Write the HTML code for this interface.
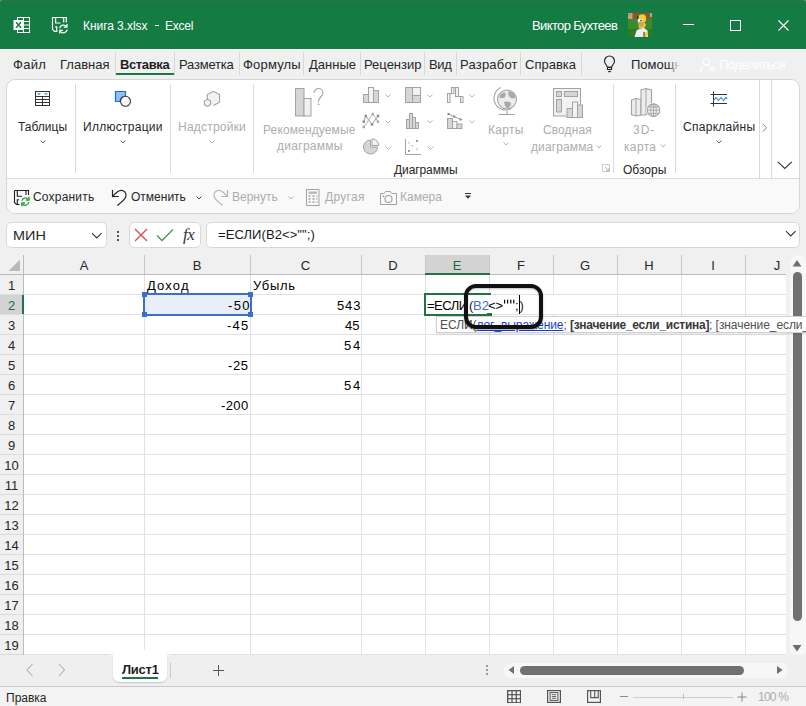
<!DOCTYPE html>
<html><head><meta charset="utf-8">
<style>
*{margin:0;padding:0;box-sizing:border-box}
html,body{width:806px;height:706px;overflow:hidden;background:#f0f0f0;font-family:"Liberation Sans",sans-serif;color:#262626}
.a{position:absolute}
.t{position:absolute;white-space:nowrap}
</style></head><body>
<div class="a" style="left:0px;top:0px;width:806px;height:49px;background:#147c42"></div><div class="a" style="left:0px;top:0px;width:806px;height:1px;background:#2a7550"></div><svg class="a" style="left:0px;top:0px" width="5" height="5" viewBox="0 0 5 5"><path d="M0 0 H3 A3 3 0 0 0 0 3 Z" fill="#6fa088"/></svg><svg class="a" style="left:801px;top:0px" width="5" height="5" viewBox="0 0 5 5"><path d="M5 0 H2 A3 3 0 0 1 5 3 Z" fill="#6fa088"/></svg><svg class="a" style="left:13px;top:16px" width="18" height="18" viewBox="0 0 18 18">
<rect x="4.5" y="1.5" width="12" height="15" fill="none" stroke="#fff" stroke-width="1"/>
<line x1="4.5" y1="5.5" x2="16.5" y2="5.5" stroke="#fff"/>
<line x1="4.5" y1="9" x2="16.5" y2="9" stroke="#fff"/>
<line x1="4.5" y1="12.5" x2="16.5" y2="12.5" stroke="#fff"/>
<line x1="10.5" y1="1.5" x2="10.5" y2="16.5" stroke="#fff"/>
<rect x="0.5" y="4" width="10" height="10" fill="#fff"/>
<path d="M3 6.2 L8 11.8 M8 6.2 L3 11.8" stroke="#177c43" stroke-width="1.5"/>
</svg><svg class="a" style="left:51px;top:16px" width="18" height="18" viewBox="0 0 18 18">
<path d="M1.5 1.5 H15.3 V6.5 M1.5 1.5 V13.3 L3.5 15.3 H6.5" fill="none" stroke="#fff" stroke-width="1.2"/>
<path d="M4.6 1.5 V7 H9.4" fill="none" stroke="#fff" stroke-width="1.2"/>
<path d="M12.7 1.5 V6.5" fill="none" stroke="#fff" stroke-width="1.2"/>
<path d="M5.7 15.3 V10.8 H4.2" fill="none" stroke="#fff" stroke-width="1.2"/>
<path d="M8.6 12.3 A3.9 3.9 0 0 1 15.5 10.6" fill="none" stroke="#fff" stroke-width="1.3"/>
<path d="M16 8 V11.2 H12.8" fill="none" stroke="#fff" stroke-width="1.3"/>
<path d="M16.2 13.6 A3.9 3.9 0 0 1 9.3 15.3" fill="none" stroke="#fff" stroke-width="1.3"/>
<path d="M8.8 17.5 V14.3 H12" fill="none" stroke="#fff" stroke-width="1.3"/>
</svg><div class="t" style="left:83px;top:16px;font-size:12px;color:#fff;line-height:20px;height:20px;letter-spacing:-0.06px">Книга 3.xlsx</div><div class="a" style="left:155px;top:25px;width:4px;height:1px;background:#fff"></div><div class="t" style="left:165px;top:16px;font-size:12px;color:#fff;line-height:20px;height:20px;letter-spacing:-0.25px">Excel</div><div class="t" style="left:532px;top:16px;font-size:13px;color:#fff;line-height:20px;height:20px;letter-spacing:-0.62px">Виктор Бухтеев</div><svg class="a" style="left:628px;top:13px" width="24" height="24" viewBox="0 0 24 24">
<rect width="24" height="24" fill="#3d8a2c"/>
<rect x="0" y="16" width="24" height="8" fill="#2f7a25"/>
<rect width="24" height="5.5" fill="#8b5530"/>
<rect x="0" y="0" width="4.5" height="6" fill="#c9a07a"/>
<rect x="22" y="0" width="2" height="4" fill="#c9a07a"/>
<rect x="0.5" y="1" width="1.2" height="1.2" fill="#e06a20"/>
<path d="M10.5 3 Q11.5 1.3 14.5 1.3 Q17.8 1.5 18 4.5 L18 11 Q17.5 13.5 16 15 L11 15 L10.5 12 Z" fill="#f3cf2c"/>
<path d="M9.8 5.8 H14.6 V9.2 H9.8 Z" fill="#f4f4f4"/>
<rect x="12.3" y="6.8" width="1.5" height="1.5" fill="#333"/>
<path d="M10.5 8.8 H15.6 V13 Q14 14.5 11.5 14 Z" fill="#c7a66e"/>
<rect x="9.2" y="3" width="1.2" height="3" fill="#2a2a1a"/>
<rect x="16.8" y="8.5" width="1" height="2" fill="#3a2a10"/>
<path d="M6.5 24 L8.5 17.5 Q12 14.5 16 15 L19.5 17.5 L20 24 Z" fill="#ededed"/>
<rect x="16" y="19.5" width="3.2" height="4.5" fill="#f3cf2c"/>
<rect x="15.5" y="19" width="1" height="5" fill="#3a3a20"/>
</svg><div class="a" style="left:683px;top:24px;width:11px;height:1px;background:#fff"></div><svg class="a" style="left:730px;top:20px" width="12" height="12" viewBox="0 0 12 12"><rect x="0.5" y="0.5" width="10" height="10" fill="none" stroke="#fff"/></svg><svg class="a" style="left:778px;top:20px" width="12" height="12" viewBox="0 0 12 12"><path d="M0.5 0.5 L10.5 10.5 M10.5 0.5 L0.5 10.5" stroke="#fff" stroke-width="1.1"/></svg><div class="t" style="left:13px;top:55px;font-size:13px;color:#262626;line-height:20px;height:20px;letter-spacing:0.27px">Файл</div><div class="t" style="left:60px;top:55px;font-size:13px;color:#262626;line-height:20px;height:20px">Главная</div><div class="t" style="left:179px;top:55px;font-size:13px;color:#262626;line-height:20px;height:20px;letter-spacing:-0.19px">Разметка</div><div class="t" style="left:243px;top:55px;font-size:13px;color:#262626;line-height:20px;height:20px;letter-spacing:0.18px">Формулы</div><div class="t" style="left:309px;top:55px;font-size:13px;color:#262626;line-height:20px;height:20px">Данные</div><div class="t" style="left:364px;top:55px;font-size:13px;color:#262626;line-height:20px;height:20px">Рецензир</div><div class="t" style="left:429px;top:55px;font-size:13px;color:#262626;line-height:20px;height:20px;letter-spacing:-0.4px">Вид</div><div class="t" style="left:460px;top:55px;font-size:13px;color:#262626;line-height:20px;height:20px;letter-spacing:0.2px">Разработ</div><div class="t" style="left:525px;top:55px;font-size:13px;color:#262626;line-height:20px;height:20px">Справка</div><div class="t" style="left:631px;top:55px;font-size:13px;color:#262626;line-height:20px;height:20px">Помощн</div><div class="t" style="left:120px;top:55px;font-size:13px;color:#1f1f1f;line-height:20px;height:20px;font-weight:700;letter-spacing:-0.38px">Вставка</div><div class="a" style="left:115px;top:73px;width:60px;height:2px;background:#147c42"></div><div class="a" style="left:115px;top:52px;width:1px;height:23px;background:#d8d8d8"></div><div class="a" style="left:174px;top:52px;width:1px;height:23px;background:#d8d8d8"></div><div class="a" style="left:239px;top:52px;width:1px;height:23px;background:#d8d8d8"></div><div class="a" style="left:303px;top:52px;width:1px;height:23px;background:#d8d8d8"></div><div class="a" style="left:360px;top:52px;width:1px;height:23px;background:#d8d8d8"></div><div class="a" style="left:424px;top:52px;width:1px;height:23px;background:#d8d8d8"></div><div class="a" style="left:456px;top:52px;width:1px;height:23px;background:#d8d8d8"></div><div class="a" style="left:520px;top:52px;width:1px;height:23px;background:#d8d8d8"></div><div class="a" style="left:581px;top:52px;width:1px;height:23px;background:#d8d8d8"></div><svg class="a" style="left:603px;top:55px" width="13" height="18" viewBox="0 0 13 18">
<path d="M4.5 12.3 L3 9.6 A5 5 0 1 1 10 9.6 L8.5 12.3 Z" fill="none" stroke="#222" stroke-width="1.1" stroke-linejoin="round"/>
<rect x="4.5" y="12.3" width="4" height="2.2" fill="none" stroke="#222" stroke-width="1.1"/>
<path d="M5.2 16.6 H7.8" stroke="#222" stroke-width="1.2"/>
</svg><svg class="a" style="left:700px;top:57px" width="16" height="16" viewBox="0 0 16 16">
<circle cx="6.5" cy="4.5" r="3.5" fill="none" stroke="#ffffff" stroke-width="1.1"/>
<path d="M0.5 15 C1 10 3.5 8.5 6.5 8.5 C8 8.5 9 9 10 9.5" fill="none" stroke="#ffffff" stroke-width="1.1"/>
<path d="M12 9 V15 M9 12 H15" stroke="#ffffff" stroke-width="1.1"/>
</svg><div class="t" style="left:719px;top:55px;font-size:13px;color:#ffffff;line-height:20px;height:20px;letter-spacing:-0.57px">Поделиться</div><div class="a" style="left:668px;top:55px;width:14px;height:20px;background:linear-gradient(to right, rgba(240,240,240,0), #f0f0f0 85%)"></div><div class="a" style="left:6px;top:79px;width:794px;height:135px;background:#fff;border:1px solid #d6d6d6;border-radius:9px"></div><div class="a" style="left:7px;top:178px;width:792px;height:35px;background:#f9f9f9;border-top:1px solid #dcdcdc;border-radius:0 0 8px 8px"></div><div class="a" style="left:75px;top:84px;width:1px;height:89px;background:#dadada"></div><div class="a" style="left:170px;top:84px;width:1px;height:89px;background:#dadada"></div><div class="a" style="left:253px;top:84px;width:1px;height:89px;background:#dadada"></div><div class="a" style="left:613px;top:84px;width:1px;height:89px;background:#dadada"></div><div class="a" style="left:675px;top:84px;width:1px;height:89px;background:#dadada"></div><div class="a" style="left:759px;top:79px;width:1px;height:99px;background:#dadada"></div><div class="a" style="left:771px;top:79px;width:1px;height:99px;background:#dadada"></div><svg class="a" style="left:35px;top:91px" width="15" height="15" viewBox="0 0 15 15">
<rect x="0.5" y="0.5" width="14" height="14" fill="#fff" stroke="#333"/>
<line x1="0.5" y1="5.5" x2="14.5" y2="5.5" stroke="#333"/>
<line x1="0.5" y1="8.5" x2="14.5" y2="8.5" stroke="#333"/>
<line x1="0.5" y1="11.5" x2="14.5" y2="11.5" stroke="#333"/>
<line x1="7.5" y1="5.5" x2="7.5" y2="14.5" stroke="#333"/>
<path d="M2 2.2 H6 L4 4 Z M9 2.2 H13 L11 4 Z" fill="#1e88d6"/>
</svg><div class="t" style="left:18px;top:117px;font-size:12px;color:#262626;line-height:20px;height:20px">Таблицы</div><svg class="a" style="left:39.5px;top:140px" width="6" height="4.5" viewBox="0 0 6 4.5"><path d="M0.5 0.5 L3.0 3.0 L5.5 0.5" fill="none" stroke="#666" stroke-width="1"/></svg><svg class="a" style="left:114px;top:90px" width="18" height="18" viewBox="0 0 18 18">
<path d="M1.5 1.5 H11.5 V6 A6 6 0 0 0 6 11.5 H1.5 Z" fill="#90c2f0" stroke="#1b6ec8" stroke-width="1.2"/>
<circle cx="11.5" cy="11.3" r="5" fill="#f7f7f7" stroke="#333" stroke-width="1.1"/>
</svg><div class="t" style="left:83px;top:117px;font-size:12px;color:#262626;line-height:20px;height:20px;letter-spacing:0.28px">Иллюстрации</div><svg class="a" style="left:120.0px;top:140px" width="6" height="4.5" viewBox="0 0 6 4.5"><path d="M0.5 0.5 L3.0 3.0 L5.5 0.5" fill="none" stroke="#666" stroke-width="1"/></svg><svg class="a" style="left:202px;top:89px" width="20" height="19" viewBox="0 0 20 19">
<path d="M5.3 10.5 V5.6 L11.4 2.3 L17.6 5.6 V13.2 L11.4 16.5" fill="#f2f2f2" stroke="#a3a3a3" stroke-width="1.1"/>
<path d="M5.5 10.2 L8.6 12 V15.6 L5.5 17.4 L2.4 15.6 V12 Z" fill="#f2f2f2" stroke="#a3a3a3" stroke-width="1.1"/>
</svg><div class="t" style="left:178px;top:117px;font-size:12px;color:#adadad;line-height:20px;height:20px;letter-spacing:0.22px">Надстройки</div><svg class="a" style="left:209.0px;top:140px" width="6" height="4.5" viewBox="0 0 6 4.5"><path d="M0.5 0.5 L3.0 3.0 L5.5 0.5" fill="none" stroke="#b5b5b5" stroke-width="1"/></svg><svg class="a" style="left:294px;top:87px" width="31" height="30" viewBox="0 0 31 30">
<rect x="1.5" y="1.5" width="8.5" height="27.5" fill="#d6d6d6" stroke="#a3a3a3"/>
<rect x="10" y="11.5" width="7" height="17.5" fill="#f0f0f0" stroke="#a3a3a3"/>
<path d="M20 6 C20 2.5 23 1.5 24.5 1.5 C27 1.5 29 3.5 29 6 C29 9.5 24.5 10.5 24.5 14 V15" fill="none" stroke="#a3a3a3" stroke-width="1.1"/>
<rect x="23.8" y="16.5" width="1.6" height="1.6" fill="#a3a3a3"/>
</svg><div class="t" style="left:263px;top:120px;font-size:12px;color:#adadad;line-height:20px;height:20px;letter-spacing:0.13px">Рекомендуемые</div><div class="t" style="left:277px;top:136px;font-size:12px;color:#adadad;line-height:20px;height:20px;letter-spacing:0.28px">диаграммы</div><svg class="a" style="left:362px;top:86px" width="18" height="18" viewBox="0 0 18 18">
<rect x="1.5" y="8.5" width="5" height="8" fill="#d6d6d6" stroke="#a3a3a3"/>
<rect x="6.5" y="1.5" width="5" height="15" fill="#f2f2f2" stroke="#a3a3a3"/>
<rect x="11.5" y="4.5" width="5" height="12" fill="#d6d6d6" stroke="#a3a3a3"/>
</svg><svg class="a" style="left:404px;top:86px" width="18" height="18" viewBox="0 0 18 18">
<rect x="1.5" y="1.5" width="15" height="15" fill="#d6d6d6" stroke="#a3a3a3"/>
<rect x="8.5" y="1.5" width="8" height="8" fill="#f2f2f2" stroke="#a3a3a3"/>
<path d="M8.5 1.5 V16.5" stroke="#a3a3a3"/>
</svg><svg class="a" style="left:446px;top:86px" width="18" height="18" viewBox="0 0 18 18">
<rect x="1.5" y="7.5" width="2.5" height="9" fill="#f2f2f2" stroke="#a3a3a3"/>
<rect x="5.5" y="1.5" width="2.5" height="6" fill="#f2f2f2" stroke="#a3a3a3"/>
<rect x="9.5" y="1.5" width="3" height="9" fill="#f2f2f2" stroke="#a3a3a3"/>
<rect x="14.5" y="10.5" width="2.5" height="6" fill="#f2f2f2" stroke="#a3a3a3"/>
<path d="M4 7.5 H5.5 M8 1.5 H9.5 M12.5 10.5 H14.5" stroke="#a3a3a3"/>
</svg><svg class="a" style="left:360px;top:110px" width="22" height="22" viewBox="0 0 22 22">
<path d="M3.8 11.7 L5.8 5.9 L12 14.5 L18 5.9" fill="none" stroke="#9a9a9a" stroke-width="1"/>
<path d="M3.8 17 L12.8 4 L18 11.7" fill="none" stroke="#b4b4b4" stroke-width="1"/>
<rect x="2.6" y="10.5" width="2.4" height="2.4" fill="#8a8a8a"/><rect x="4.6" y="4.7" width="2.4" height="2.4" fill="#8a8a8a"/>
<rect x="10.8" y="13.3" width="2.4" height="2.4" fill="#8a8a8a"/><rect x="16.8" y="4.7" width="2.4" height="2.4" fill="#8a8a8a"/>
<rect x="2.6" y="15.8" width="2.4" height="2.4" fill="#aaa"/><rect x="11.6" y="2.8" width="2.4" height="2.4" fill="#aaa"/><rect x="16.8" y="10.5" width="2.4" height="2.4" fill="#aaa"/>
</svg><svg class="a" style="left:404px;top:112px" width="18" height="18" viewBox="0 0 18 18">
<rect x="2.5" y="7.5" width="3" height="9" fill="#d6d6d6" stroke="#a3a3a3"/>
<rect x="5.5" y="1.5" width="3" height="15" fill="#d6d6d6" stroke="#a3a3a3"/>
<rect x="8.5" y="5.5" width="3" height="11" fill="#d6d6d6" stroke="#a3a3a3"/>
<rect x="11.5" y="10.5" width="3" height="6" fill="#d6d6d6" stroke="#a3a3a3"/>
</svg><svg class="a" style="left:446px;top:112px" width="18" height="18" viewBox="0 0 18 18">
<rect x="1.5" y="6.5" width="5" height="10" fill="#d6d6d6" stroke="#a3a3a3"/>
<rect x="6.5" y="9.5" width="4.5" height="7" fill="#f2f2f2" stroke="#a3a3a3"/>
<rect x="11" y="12" width="5" height="4.5" fill="#d6d6d6" stroke="#a3a3a3"/>
<path d="M2.5 2 L8 4.5 L15 7.5" fill="none" stroke="#999" stroke-width="0.9"/>
<rect x="1.5" y="1" width="2.2" height="2" fill="#888"/><rect x="7" y="3.5" width="2.2" height="2" fill="#888"/><rect x="13.5" y="6.5" width="2.2" height="2" fill="#888"/>
</svg><svg class="a" style="left:362px;top:138px" width="18" height="18" viewBox="0 0 18 18">
<path d="M8.5 2 A7 7 0 1 0 15.5 9 H8.5 Z" fill="#d6d6d6" stroke="#a3a3a3"/>
<path d="M10 0.8 A7 7 0 0 1 16.8 7.5 H10 Z" fill="#f2f2f2" stroke="#a3a3a3"/>
</svg><svg class="a" style="left:404px;top:138px" width="18" height="18" viewBox="0 0 18 18">
<path d="M1.5 1 V16.5 H17" fill="none" stroke="#a3a3a3"/>
<rect x="4" y="4" width="1.6" height="1.6" fill="#ccc"/><rect x="7.5" y="7" width="1.6" height="1.6" fill="#ccc"/>
<rect x="12" y="2" width="1.8" height="1.8" fill="#888"/><rect x="4" y="12" width="1.8" height="1.8" fill="#888"/>
<rect x="12" y="10.5" width="1.6" height="1.6" fill="#ccc"/>
</svg><svg class="a" style="left:385.0px;top:94px" width="6" height="4.5" viewBox="0 0 6 4.5"><path d="M0.5 0.5 L3.0 3.0 L5.5 0.5" fill="none" stroke="#b5b5b5" stroke-width="1"/></svg><svg class="a" style="left:385.0px;top:120px" width="6" height="4.5" viewBox="0 0 6 4.5"><path d="M0.5 0.5 L3.0 3.0 L5.5 0.5" fill="none" stroke="#b5b5b5" stroke-width="1"/></svg><svg class="a" style="left:427.0px;top:94px" width="6" height="4.5" viewBox="0 0 6 4.5"><path d="M0.5 0.5 L3.0 3.0 L5.5 0.5" fill="none" stroke="#b5b5b5" stroke-width="1"/></svg><svg class="a" style="left:427.0px;top:120px" width="6" height="4.5" viewBox="0 0 6 4.5"><path d="M0.5 0.5 L3.0 3.0 L5.5 0.5" fill="none" stroke="#b5b5b5" stroke-width="1"/></svg><svg class="a" style="left:469.0px;top:94px" width="6" height="4.5" viewBox="0 0 6 4.5"><path d="M0.5 0.5 L3.0 3.0 L5.5 0.5" fill="none" stroke="#b5b5b5" stroke-width="1"/></svg><svg class="a" style="left:469.0px;top:120px" width="6" height="4.5" viewBox="0 0 6 4.5"><path d="M0.5 0.5 L3.0 3.0 L5.5 0.5" fill="none" stroke="#b5b5b5" stroke-width="1"/></svg><svg class="a" style="left:384.5px;top:146px" width="7" height="5.0" viewBox="0 0 7 5.0"><path d="M0.5 0.5 L3.5 3.5 L6.5 0.5" fill="none" stroke="#b5b5b5" stroke-width="1"/></svg><svg class="a" style="left:426.5px;top:146px" width="7" height="5.0" viewBox="0 0 7 5.0"><path d="M0.5 0.5 L3.5 3.5 L6.5 0.5" fill="none" stroke="#b5b5b5" stroke-width="1"/></svg><div class="t" style="left:394px;top:160px;font-size:12px;color:#262626;line-height:20px;height:20px;letter-spacing:-0.1px">Диаграммы</div><svg class="a" style="left:601px;top:163px" width="10" height="10" viewBox="0 0 10 10"><path d="M1.5 1.5 V8.5 H8.5 V1.5 Z" fill="none" stroke="#c9c9c9"/><path d="M4 4 L8 8 M8 5 V8 H5" fill="none" stroke="#b0b0b0"/></svg><svg class="a" style="left:492px;top:86px" width="26" height="32" viewBox="0 0 26 32">
<path d="M9 1.5 A11.5 11.5 0 0 0 18.5 23" fill="none" stroke="#a3a3a3" stroke-width="1.1"/>
<circle cx="15" cy="13.5" r="9.5" fill="#ececec" stroke="#a3a3a3" stroke-width="1.1"/>
<path d="M8 9 Q10 6 13 6.5 Q14.5 9 12.5 11.5 Q10 12.5 7.5 12 Z M16.5 5 Q21 5.5 23.5 10 Q23 13 20 12.5 Q17 11 16 8 Z M12 16 Q16 14.5 19 17 Q19 21 15 22.5 Q12.5 20 12 16 Z" fill="#a9a9a9"/>
<path d="M15 25 V28.5 M6.5 28.5 H23" stroke="#a3a3a3" stroke-width="1.1"/>
</svg><div class="t" style="left:488px;top:120px;font-size:12px;color:#adadad;line-height:20px;height:20px;letter-spacing:0.3px">Карты</div><svg class="a" style="left:503.0px;top:142px" width="6" height="4.5" viewBox="0 0 6 4.5"><path d="M0.5 0.5 L3.0 3.0 L5.5 0.5" fill="none" stroke="#b5b5b5" stroke-width="1"/></svg><svg class="a" style="left:552px;top:87px" width="32" height="32" viewBox="0 0 32 32">
<rect x="1.5" y="1.5" width="27" height="27.5" fill="#f2f2f2" stroke="#a3a3a3"/>
<rect x="4.5" y="4.5" width="5" height="5" fill="#d6d6d6" stroke="#a3a3a3"/>
<rect x="12.5" y="4.5" width="13" height="5" fill="#d6d6d6" stroke="#a3a3a3"/>
<rect x="4.5" y="12.5" width="5" height="12.5" fill="#d6d6d6" stroke="#a3a3a3"/>
<rect x="15" y="21.5" width="5.5" height="9" fill="#d6d6d6" stroke="#a3a3a3" />
<rect x="20.5" y="15" width="5" height="15.5" fill="#f2f2f2" stroke="#a3a3a3"/>
<rect x="25.5" y="18" width="5" height="12.5" fill="#d6d6d6" stroke="#a3a3a3"/>
</svg><div class="t" style="left:543px;top:120px;font-size:12px;color:#adadad;line-height:20px;height:20px;letter-spacing:0.1px">Сводная</div><div class="t" style="left:531px;top:137px;font-size:12px;color:#adadad;line-height:20px;height:20px;letter-spacing:0.12px">диаграмма</div><svg class="a" style="left:596.0px;top:145px" width="6" height="4.5" viewBox="0 0 6 4.5"><path d="M0.5 0.5 L3.0 3.0 L5.5 0.5" fill="none" stroke="#b5b5b5" stroke-width="1"/></svg><svg class="a" style="left:630px;top:87px" width="32" height="32" viewBox="0 0 32 32">
<path d="M1.5 13 L6 11.5 L11 12.5 V28 L6 29 L1.5 27.5 Z" fill="#ededed" stroke="#a3a3a3" stroke-width="1.1"/>
<path d="M6 11.5 V29" stroke="#a3a3a3"/>
<path d="M11 3 L16 1.5 L21.5 3 V24 L16 28 L11 28 Z" fill="#ededed" stroke="#a3a3a3" stroke-width="1.1"/>
<path d="M16 1.5 V28" stroke="#a3a3a3"/>
<circle cx="23.5" cy="23.2" r="7.5" fill="#fff"/>
<circle cx="23.5" cy="23.2" r="6.3" fill="#f2f2f2" stroke="#a3a3a3" stroke-width="1.1"/>
<path d="M17.2 23.2 H29.8 M23.5 17 V29.5 M18.3 20 H28.7 M18.3 26.4 H28.7" stroke="#a3a3a3" stroke-width="0.9"/>
<ellipse cx="23.5" cy="23.2" rx="2.8" ry="6.3" fill="none" stroke="#a3a3a3" stroke-width="0.9"/>
</svg><div class="t" style="left:633px;top:120px;font-size:12px;color:#adadad;line-height:20px;height:20px;letter-spacing:1.0px">3D-</div><div class="t" style="left:624px;top:137px;font-size:12px;color:#adadad;line-height:20px;height:20px;letter-spacing:0.35px">карта</div><svg class="a" style="left:660.0px;top:144px" width="6" height="4.5" viewBox="0 0 6 4.5"><path d="M0.5 0.5 L3.0 3.0 L5.5 0.5" fill="none" stroke="#b5b5b5" stroke-width="1"/></svg><div class="t" style="left:623px;top:160px;font-size:12px;color:#262626;line-height:20px;height:20px">Обзоры</div><svg class="a" style="left:710px;top:91px" width="18" height="16" viewBox="0 0 18 16">
<path d="M0.5 3.5 H17 M0.5 12.5 H17 M3.5 0.5 V15.5" stroke="#333" stroke-width="1"/>
<path d="M3.5 9.5 L6 6.5 L8.5 9.5 L11 6.5 L13.5 9.5 L16 6.5 L17 8" fill="none" stroke="#2b8ad6" stroke-width="1.1"/>
</svg><div class="t" style="left:683px;top:117px;font-size:12px;color:#262626;line-height:20px;height:20px;letter-spacing:0.28px">Спарклайны</div><svg class="a" style="left:716.0px;top:140px" width="6" height="4.5" viewBox="0 0 6 4.5"><path d="M0.5 0.5 L3.0 3.0 L5.5 0.5" fill="none" stroke="#666" stroke-width="1"/></svg><svg class="a" style="left:762px;top:123px" width="6" height="10" viewBox="0 0 6 10"><path d="M0.8 0.8 L4.5 4.8 L0.8 8.8" fill="none" stroke="#888" stroke-width="1"/></svg><svg class="a" style="left:777px;top:161px" width="16" height="9" viewBox="0 0 16 9"><path d="M0.8 0.8 L7.8 7.5 L14.8 0.8" fill="none" stroke="#333" stroke-width="1.1"/></svg><svg class="a" style="left:13px;top:189px" width="18" height="18" viewBox="0 0 18 18">
<path d="M1.5 1.5 H15.5 V6 M1.5 1.5 V13.5 L3.5 15.5 H6.5" fill="none" stroke="#222" stroke-width="1.1"/>
<path d="M4.3 1.5 V7.3 H9" fill="none" stroke="#222" stroke-width="1.1"/>
<path d="M13 1.5 V6" fill="none" stroke="#222" stroke-width="1.1"/>
<path d="M4.3 15.5 V10.8 H6" fill="none" stroke="#222" stroke-width="1.1"/>
<path d="M8.8 11.8 A3.9 3.9 0 0 1 15.5 10.3" fill="none" stroke="#26a040" stroke-width="1.3"/>
<path d="M16 7.8 V11 H12.8" fill="none" stroke="#26a040" stroke-width="1.3"/>
<path d="M16 13.2 A3.9 3.9 0 0 1 9.3 15" fill="none" stroke="#26a040" stroke-width="1.3"/>
<path d="M8.8 17.2 V14 H12" fill="none" stroke="#26a040" stroke-width="1.3"/>
</svg><div class="t" style="left:33px;top:187px;font-size:12px;color:#262626;line-height:20px;height:20px;letter-spacing:0.19px">Сохранить</div><svg class="a" style="left:110px;top:188px" width="18" height="19" viewBox="0 0 18 19">
<path d="M2.5 2 V8.5 H8.8" fill="none" stroke="#222" stroke-width="1.2"/>
<path d="M2.8 8.2 C6 4.5 8 2.3 11 2.3 C14 2.3 16 4.5 16 7.5 C16 10 14.5 11.3 7.5 17.5" fill="none" stroke="#222" stroke-width="1.2"/>
</svg><div class="t" style="left:131px;top:187px;font-size:12px;color:#262626;line-height:20px;height:20px">Отменить</div><svg class="a" style="left:196.0px;top:196px" width="6" height="4.5" viewBox="0 0 6 4.5"><path d="M0.5 0.5 L3.0 3.0 L5.5 0.5" fill="none" stroke="#444" stroke-width="1"/></svg><svg class="a" style="left:212px;top:188px" width="18" height="19" viewBox="0 0 18 19">
<path d="M15.5 2 V8.5 H9.2" fill="none" stroke="#b5b5b5" stroke-width="1.2"/>
<path d="M15.2 8.2 C12 4.5 10 2.3 7 2.3 C4 2.3 2 4.5 2 7.5 C2 10 3.5 11.3 10.5 17.5" fill="none" stroke="#b5b5b5" stroke-width="1.2"/>
</svg><div class="t" style="left:232px;top:187px;font-size:12px;color:#adadad;line-height:20px;height:20px">Вернуть</div><svg class="a" style="left:288.0px;top:196px" width="6" height="4.5" viewBox="0 0 6 4.5"><path d="M0.5 0.5 L3.0 3.0 L5.5 0.5" fill="none" stroke="#bdbdbd" stroke-width="1"/></svg><svg class="a" style="left:306px;top:189px" width="14" height="18" viewBox="0 0 14 18">
<rect x="0.5" y="0.5" width="12.5" height="16" fill="none" stroke="#a3a3a3" stroke-width="1"/>
<rect x="2.5" y="2.5" width="8.5" height="2.5" fill="#bbb"/>
<path d="M2.5 7 h2 m2 0 h2 m2 0 h1 M2.5 10 h2 m2 0 h2 m2 0 h1 M2.5 13 h2 m2 0 h2 m2 0 h1" stroke="#a3a3a3" stroke-width="1.6"/>
</svg><div class="t" style="left:325px;top:187px;font-size:12px;color:#adadad;line-height:20px;height:20px;letter-spacing:0.3px">Другая</div><svg class="a" style="left:380px;top:190px" width="18" height="16" viewBox="0 0 18 16">
<path d="M0.5 3.5 H4 L5.5 1.5 H10.5 L12 3.5 H16.5 V14.5 H0.5 Z" fill="none" stroke="#a3a3a3" stroke-width="1"/>
<circle cx="8.5" cy="9" r="3.5" fill="none" stroke="#a3a3a3" stroke-width="1.1"/>
<rect x="2.5" y="5.5" width="1.6" height="1.6" fill="#a3a3a3"/>
</svg><div class="t" style="left:400px;top:187px;font-size:12px;color:#adadad;line-height:20px;height:20px">Камера</div><svg class="a" style="left:464px;top:192px" width="8" height="8" viewBox="0 0 8 8"><path d="M1 1.5 H7" stroke="#333" stroke-width="1"/><path d="M1 3.5 H7 L4 6.8 Z" fill="#333"/></svg><div class="a" style="left:6px;top:222px;width:101px;height:26px;background:#fff;border:1px solid #d9d9d9;border-radius:5px"></div><div class="t" style="left:12.5px;top:226px;font-size:13px;color:#262626;line-height:20px;height:20px;transform:scaleX(1.11);transform-origin:0 0">МИН</div><svg class="a" style="left:91px;top:232px" width="12" height="8" viewBox="0 0 12 8"><path d="M1 1.2 L5.8 6 L10.6 1.2" fill="none" stroke="#333" stroke-width="1.1"/></svg><div class="a" style="left:117px;top:231px;width:2px;height:2px;background:#555"></div><div class="a" style="left:117px;top:235px;width:2px;height:2px;background:#555"></div><div class="a" style="left:117px;top:239px;width:2px;height:2px;background:#555"></div><div class="a" style="left:129px;top:222px;width:72px;height:26px;background:#fff;border:1px solid #d9d9d9;border-radius:5px"></div><svg class="a" style="left:134px;top:228px" width="14" height="14" viewBox="0 0 14 14"><path d="M1 1 L13 13 M13 1 L1 13" stroke="#e04848" stroke-width="1.3"/></svg><svg class="a" style="left:156px;top:228px" width="18" height="14" viewBox="0 0 18 14"><path d="M1 7.5 L6 12.5 L17 1.5" fill="none" stroke="#3d9b55" stroke-width="1.3"/></svg><div class="t" style="left:183px;top:224px;font-size:17px;color:#333;line-height:22px;height:22px;font-family:'Liberation Serif',serif;font-style:italic;letter-spacing:-0.5px">fx</div><div class="a" style="left:206px;top:222px;width:594px;height:26px;background:#fff;border:1px solid #d9d9d9;border-radius:5px"></div><div class="t" style="left:218px;top:225px;font-size:13px;color:#1a1a1a;line-height:20px;height:20px;letter-spacing:0.08px">=ЕСЛИ(B2&lt;&gt;"";)</div><svg class="a" style="left:785px;top:230px" width="12" height="8" viewBox="0 0 12 8"><path d="M1 1.2 L5.8 6 L10.6 1.2" fill="none" stroke="#333" stroke-width="1.1"/></svg><div class="a" style="left:0px;top:255px;width:786px;height:20px;background:#f0f0f0"></div><div class="a" style="left:0px;top:275px;width:24px;height:380px;background:#f0f0f0"></div><div class="a" style="left:24px;top:275px;width:762px;height:380px;background:#fff"></div><div class="a" style="left:425px;top:255px;width:65px;height:19px;background:#d3d3d3"></div><div class="a" style="left:0px;top:295px;width:23px;height:19px;background:#d3d3d3"></div><div class="a" style="left:24px;top:294px;width:762px;height:1px;background:#e1e1e1"></div><div class="a" style="left:0px;top:294px;width:23px;height:1px;background:#dcdcdc"></div><div class="a" style="left:24px;top:314px;width:762px;height:1px;background:#e1e1e1"></div><div class="a" style="left:0px;top:314px;width:23px;height:1px;background:#dcdcdc"></div><div class="a" style="left:24px;top:334px;width:762px;height:1px;background:#e1e1e1"></div><div class="a" style="left:0px;top:334px;width:23px;height:1px;background:#dcdcdc"></div><div class="a" style="left:24px;top:354px;width:762px;height:1px;background:#e1e1e1"></div><div class="a" style="left:0px;top:354px;width:23px;height:1px;background:#dcdcdc"></div><div class="a" style="left:24px;top:374px;width:762px;height:1px;background:#e1e1e1"></div><div class="a" style="left:0px;top:374px;width:23px;height:1px;background:#dcdcdc"></div><div class="a" style="left:24px;top:394px;width:762px;height:1px;background:#e1e1e1"></div><div class="a" style="left:0px;top:394px;width:23px;height:1px;background:#dcdcdc"></div><div class="a" style="left:24px;top:414px;width:762px;height:1px;background:#e1e1e1"></div><div class="a" style="left:0px;top:414px;width:23px;height:1px;background:#dcdcdc"></div><div class="a" style="left:24px;top:434px;width:762px;height:1px;background:#e1e1e1"></div><div class="a" style="left:0px;top:434px;width:23px;height:1px;background:#dcdcdc"></div><div class="a" style="left:24px;top:454px;width:762px;height:1px;background:#e1e1e1"></div><div class="a" style="left:0px;top:454px;width:23px;height:1px;background:#dcdcdc"></div><div class="a" style="left:24px;top:474px;width:762px;height:1px;background:#e1e1e1"></div><div class="a" style="left:0px;top:474px;width:23px;height:1px;background:#dcdcdc"></div><div class="a" style="left:24px;top:494px;width:762px;height:1px;background:#e1e1e1"></div><div class="a" style="left:0px;top:494px;width:23px;height:1px;background:#dcdcdc"></div><div class="a" style="left:24px;top:514px;width:762px;height:1px;background:#e1e1e1"></div><div class="a" style="left:0px;top:514px;width:23px;height:1px;background:#dcdcdc"></div><div class="a" style="left:24px;top:534px;width:762px;height:1px;background:#e1e1e1"></div><div class="a" style="left:0px;top:534px;width:23px;height:1px;background:#dcdcdc"></div><div class="a" style="left:24px;top:554px;width:762px;height:1px;background:#e1e1e1"></div><div class="a" style="left:0px;top:554px;width:23px;height:1px;background:#dcdcdc"></div><div class="a" style="left:24px;top:574px;width:762px;height:1px;background:#e1e1e1"></div><div class="a" style="left:0px;top:574px;width:23px;height:1px;background:#dcdcdc"></div><div class="a" style="left:24px;top:594px;width:762px;height:1px;background:#e1e1e1"></div><div class="a" style="left:0px;top:594px;width:23px;height:1px;background:#dcdcdc"></div><div class="a" style="left:24px;top:614px;width:762px;height:1px;background:#e1e1e1"></div><div class="a" style="left:0px;top:614px;width:23px;height:1px;background:#dcdcdc"></div><div class="a" style="left:24px;top:634px;width:762px;height:1px;background:#e1e1e1"></div><div class="a" style="left:0px;top:634px;width:23px;height:1px;background:#dcdcdc"></div><div class="a" style="left:24px;top:654px;width:762px;height:1px;background:#e1e1e1"></div><div class="a" style="left:0px;top:654px;width:23px;height:1px;background:#dcdcdc"></div><div class="a" style="left:144px;top:275px;width:1px;height:380px;background:#e1e1e1"></div><div class="a" style="left:144px;top:255px;width:1px;height:19px;background:#c8c8c8"></div><div class="a" style="left:250px;top:275px;width:1px;height:380px;background:#e1e1e1"></div><div class="a" style="left:250px;top:255px;width:1px;height:19px;background:#c8c8c8"></div><div class="a" style="left:361px;top:275px;width:1px;height:380px;background:#e1e1e1"></div><div class="a" style="left:361px;top:255px;width:1px;height:19px;background:#c8c8c8"></div><div class="a" style="left:425px;top:275px;width:1px;height:380px;background:#e1e1e1"></div><div class="a" style="left:425px;top:255px;width:1px;height:19px;background:#c8c8c8"></div><div class="a" style="left:489px;top:275px;width:1px;height:380px;background:#e1e1e1"></div><div class="a" style="left:489px;top:255px;width:1px;height:19px;background:#c8c8c8"></div><div class="a" style="left:553px;top:275px;width:1px;height:380px;background:#e1e1e1"></div><div class="a" style="left:553px;top:255px;width:1px;height:19px;background:#c8c8c8"></div><div class="a" style="left:617px;top:275px;width:1px;height:380px;background:#e1e1e1"></div><div class="a" style="left:617px;top:255px;width:1px;height:19px;background:#c8c8c8"></div><div class="a" style="left:681px;top:275px;width:1px;height:380px;background:#e1e1e1"></div><div class="a" style="left:681px;top:255px;width:1px;height:19px;background:#c8c8c8"></div><div class="a" style="left:745px;top:275px;width:1px;height:380px;background:#e1e1e1"></div><div class="a" style="left:745px;top:255px;width:1px;height:19px;background:#c8c8c8"></div><div class="a" style="left:0px;top:274px;width:786px;height:1px;background:#bcbcbc"></div><div class="a" style="left:23px;top:255px;width:1px;height:400px;background:#bcbcbc"></div><div class="a" style="left:425px;top:273px;width:65px;height:2px;background:#217346"></div><div class="a" style="left:22px;top:295px;width:2px;height:19px;background:#217346"></div><svg class="a" style="left:8px;top:259px" width="13" height="13" viewBox="0 0 13 13"><path d="M12 0.5 V12 H0.5 Z" fill="#b9b9b9"/></svg><div class="t" style="left:24px;top:256px;width:120px;text-align:center;font-size:13px;line-height:20px;color:#262626">A</div><div class="t" style="left:144px;top:256px;width:106px;text-align:center;font-size:13px;line-height:20px;color:#262626">B</div><div class="t" style="left:250px;top:256px;width:111px;text-align:center;font-size:13px;line-height:20px;color:#262626">C</div><div class="t" style="left:361px;top:256px;width:64px;text-align:center;font-size:13px;line-height:20px;color:#262626">D</div><div class="t" style="left:425px;top:256px;width:64px;text-align:center;font-size:13px;line-height:20px;color:#1d6b3c">E</div><div class="t" style="left:489px;top:256px;width:64px;text-align:center;font-size:13px;line-height:20px;color:#262626">F</div><div class="t" style="left:553px;top:256px;width:64px;text-align:center;font-size:13px;line-height:20px;color:#262626">G</div><div class="t" style="left:617px;top:256px;width:64px;text-align:center;font-size:13px;line-height:20px;color:#262626">H</div><div class="t" style="left:681px;top:256px;width:64px;text-align:center;font-size:13px;line-height:20px;color:#262626">I</div><div class="t" style="left:745px;top:256px;width:64px;text-align:center;font-size:13px;line-height:20px;color:#262626">J</div><div class="t" style="left:0;top:276px;width:23px;text-align:center;font-size:13px;line-height:20px;color:#262626">1</div><div class="t" style="left:0;top:296px;width:23px;text-align:center;font-size:13px;line-height:20px;color:#1d6b3c">2</div><div class="t" style="left:0;top:316px;width:23px;text-align:center;font-size:13px;line-height:20px;color:#262626">3</div><div class="t" style="left:0;top:336px;width:23px;text-align:center;font-size:13px;line-height:20px;color:#262626">4</div><div class="t" style="left:0;top:356px;width:23px;text-align:center;font-size:13px;line-height:20px;color:#262626">5</div><div class="t" style="left:0;top:376px;width:23px;text-align:center;font-size:13px;line-height:20px;color:#262626">6</div><div class="t" style="left:0;top:396px;width:23px;text-align:center;font-size:13px;line-height:20px;color:#262626">7</div><div class="t" style="left:0;top:416px;width:23px;text-align:center;font-size:13px;line-height:20px;color:#262626">8</div><div class="t" style="left:0;top:436px;width:23px;text-align:center;font-size:13px;line-height:20px;color:#262626">9</div><div class="t" style="left:0;top:456px;width:23px;text-align:center;font-size:13px;line-height:20px;color:#262626">10</div><div class="t" style="left:0;top:476px;width:23px;text-align:center;font-size:13px;line-height:20px;color:#262626">11</div><div class="t" style="left:0;top:496px;width:23px;text-align:center;font-size:13px;line-height:20px;color:#262626">12</div><div class="t" style="left:0;top:516px;width:23px;text-align:center;font-size:13px;line-height:20px;color:#262626">13</div><div class="t" style="left:0;top:536px;width:23px;text-align:center;font-size:13px;line-height:20px;color:#262626">14</div><div class="t" style="left:0;top:556px;width:23px;text-align:center;font-size:13px;line-height:20px;color:#262626">15</div><div class="t" style="left:0;top:576px;width:23px;text-align:center;font-size:13px;line-height:20px;color:#262626">16</div><div class="t" style="left:0;top:596px;width:23px;text-align:center;font-size:13px;line-height:20px;color:#262626">17</div><div class="t" style="left:0;top:616px;width:23px;text-align:center;font-size:13px;line-height:20px;color:#262626">18</div><div class="t" style="left:0;top:636px;width:23px;text-align:center;font-size:13px;line-height:20px;color:#262626">19</div><div class="a" style="left:145px;top:295px;width:105px;height:19px;background:#e8eef8"></div><div class="a" style="left:143px;top:293px;width:109px;height:23px;background:transparent;border:2px solid #3c6fcd"></div><div class="a" style="left:142px;top:292px;width:5px;height:5px;background:#3c6fcd"></div><div class="a" style="left:248px;top:292px;width:5px;height:5px;background:#3c6fcd"></div><div class="a" style="left:142px;top:312px;width:5px;height:5px;background:#3c6fcd"></div><div class="a" style="left:248px;top:312px;width:5px;height:5px;background:#3c6fcd"></div><div class="t" style="left:147px;top:276px;font-size:13px;color:#000;line-height:20px;height:20px;letter-spacing:1.15px">Доход</div><div class="t" style="left:253px;top:276px;font-size:13px;color:#000;line-height:20px;height:20px;letter-spacing:0.73px">Убыль</div><div class="t" style="left:228px;top:296px;font-size:13px;color:#000;line-height:20px;height:20px;letter-spacing:1.3px">-50</div><div class="t" style="left:227px;top:316px;font-size:13px;color:#000;line-height:20px;height:20px;letter-spacing:1.2px">-45</div><div class="t" style="left:228px;top:356px;font-size:13px;color:#000;line-height:20px;height:20px;letter-spacing:0.6px">-25</div><div class="t" style="left:221px;top:396px;font-size:13px;color:#000;line-height:20px;height:20px;letter-spacing:0.4px">-200</div><div class="t" style="left:337px;top:296px;font-size:13px;color:#000;line-height:20px;height:20px;letter-spacing:0.85px">543</div><div class="t" style="left:345px;top:316px;font-size:13px;color:#000;line-height:20px;height:20px">45</div><div class="t" style="left:344px;top:336px;font-size:13px;color:#000;line-height:20px;height:20px;letter-spacing:1.7px">54</div><div class="t" style="left:344px;top:376px;font-size:13px;color:#000;line-height:20px;height:20px;letter-spacing:1.7px">54</div><div class="a" style="left:426px;top:295px;width:130px;height:19px;background:#fff"></div><div class="a" style="left:424px;top:293px;width:67px;height:2px;background:#217346"></div><div class="a" style="left:424px;top:293px;width:2px;height:23px;background:#217346"></div><div class="a" style="left:424px;top:314px;width:63px;height:2px;background:#217346"></div><div class="a" style="left:487px;top:313px;width:5px;height:4px;background:#217346"></div><div class="t" style="left:427px;top:296px;font-size:13px;color:#000;line-height:20px;height:20px;letter-spacing:-0.53px">=ЕСЛИ</div><div class="t" style="left:469px;top:296px;font-size:13px;color:#1a1a1a;line-height:20px;height:20px">(</div><div class="t" style="left:473px;top:296px;font-size:13px;color:#3f6fc6;line-height:20px;height:20px">B2</div><div class="t" style="left:488px;top:296px;font-size:13px;color:#000;line-height:20px;height:20px">&lt;&gt;</div><svg class="a" style="left:503px;top:299px" width="12" height="6" viewBox="0 0 12 6"><path d="M1.6 0.8 V4.6 M4.6 0.8 V4.6 M7.8 0.8 V4.6 M10.8 0.8 V4.6" stroke="#000" stroke-width="1.2"/></svg><div class="t" style="left:515px;top:296px;font-size:13px;color:#000;line-height:20px;height:20px">;</div><div class="a" style="left:519px;top:295px;width:1px;height:19px;background:#000"></div><div class="t" style="left:519.5px;top:296px;font-size:13px;color:#1a1a1a;line-height:20px;height:20px">)</div><div class="a" style="left:786px;top:255px;width:20px;height:400px;background:#f0f0f0"></div><div class="a" style="left:790px;top:255px;width:16px;height:402px;background:#f7f7f7;border-radius:8px"></div><svg class="a" style="left:791px;top:259px" width="12" height="9" viewBox="0 0 12 9"><path d="M1.5 7.5 L6 1 L10.5 7.5 Z" fill="#6f6f6f"/></svg><div class="a" style="left:793px;top:272px;width:9px;height:349px;background:#707070;border-radius:4.5px"></div><svg class="a" style="left:791px;top:644px" width="12" height="9" viewBox="0 0 12 9"><path d="M1.5 1 L6 7.5 L10.5 1 Z" fill="#6f6f6f"/></svg><div class="a" style="left:436px;top:316px;width:380px;height:17px;background:#fff;border:1px solid #d0d0d0;box-shadow:0 1px 2px rgba(0,0,0,0.12)"></div><div class="t" style="left:440px;top:317px;font-size:12px;line-height:17px;color:#505050;letter-spacing:-0.07px">ЕСЛИ(<span style="color:#1a3ec8;text-decoration:underline">лог_выражение</span>; <b style="color:#383838;letter-spacing:-0.28px">[значение_если_истина]</b>; [значение_если_ложь])</div><div class="a" style="left:464px;top:284px;width:79px;height:45px;background:transparent;border:4px solid #111;border-radius:12px;box-shadow:0 1px 2px rgba(0,0,0,0.35), inset 0 1px 2px rgba(0,0,0,0.25)"></div><div class="a" style="left:100px;top:655px;width:80px;height:8px;background:#fff"></div><div class="a" style="left:0px;top:655px;width:114px;height:31px;background:#efefef;border-radius:0 6px 0 0"></div><div class="a" style="left:166px;top:655px;width:640px;height:31px;background:#efefef;border-radius:6px 0 0 0"></div><svg class="a" style="left:25px;top:663px" width="10" height="14" viewBox="0 0 10 14"><path d="M7.5 1 L2 7 L7.5 13" fill="none" stroke="#b0b0b0" stroke-width="1.1"/></svg><svg class="a" style="left:57px;top:663px" width="10" height="14" viewBox="0 0 10 14"><path d="M2 1 L7.5 7 L2 13" fill="none" stroke="#b0b0b0" stroke-width="1.1"/></svg><div class="a" style="left:113px;top:655px;width:54px;height:27px;background:#fff;border-radius:0 0 6px 6px;box-shadow:0 0.5px 1.5px rgba(0,0,0,0.18)"></div><div class="a" style="left:113px;top:650px;width:54px;height:8px;background:#fff"></div><div class="t" style="left:122px;top:660px;font-size:13px;color:#1f1f1f;line-height:20px;height:20px;font-weight:700;letter-spacing:-0.25px">Лист1</div><div class="a" style="left:122px;top:677px;width:36px;height:2px;background:#217346"></div><div class="a" style="left:170px;top:663px;width:1px;height:15px;background:#c8c8c8"></div><svg class="a" style="left:212px;top:664px" width="13" height="13" viewBox="0 0 13 13"><path d="M6.5 1 V12 M1 6.5 H12" stroke="#555" stroke-width="1"/></svg><div class="a" style="left:486px;top:665px;width:2px;height:2px;background:#9a9a9a"></div><div class="a" style="left:486px;top:669px;width:2px;height:2px;background:#9a9a9a"></div><div class="a" style="left:486px;top:673px;width:2px;height:2px;background:#9a9a9a"></div><div class="a" style="left:504px;top:663px;width:284px;height:15px;background:#f7f7f7;border-radius:7px"></div><svg class="a" style="left:506px;top:665px" width="10" height="10" viewBox="0 0 10 10"><path d="M8 1 L2.5 5 L8 9 Z" fill="#6f6f6f"/></svg><div class="a" style="left:520px;top:666px;width:224px;height:9px;background:#707070;border-radius:4.5px"></div><svg class="a" style="left:775px;top:665px" width="10" height="10" viewBox="0 0 10 10"><path d="M2 1 L7.5 5 L2 9 Z" fill="#6f6f6f"/></svg><div class="a" style="left:0px;top:686px;width:806px;height:20px;background:#f3f3f3;border-top:1px solid #c8c8c8"></div><div class="t" style="left:6px;top:688px;font-size:12px;color:#262626;line-height:20px;height:20px">Правка</div><svg class="a" style="left:507px;top:690px" width="14" height="13" viewBox="0 0 14 13"><rect width="14" height="13" fill="#555"/><rect x="1.4" y="1.3" width="3" height="2.8" fill="#f3f3f3"/><rect x="1.4" y="5.3" width="3" height="2.8" fill="#f3f3f3"/><rect x="1.4" y="9.3" width="3" height="2.8" fill="#f3f3f3"/><rect x="5.65" y="1.3" width="3" height="2.8" fill="#f3f3f3"/><rect x="5.65" y="5.3" width="3" height="2.8" fill="#f3f3f3"/><rect x="5.65" y="9.3" width="3" height="2.8" fill="#f3f3f3"/><rect x="9.9" y="1.3" width="3" height="2.8" fill="#f3f3f3"/><rect x="9.9" y="5.3" width="3" height="2.8" fill="#f3f3f3"/><rect x="9.9" y="9.3" width="3" height="2.8" fill="#f3f3f3"/></svg><svg class="a" style="left:547px;top:690px" width="14" height="13" viewBox="0 0 14 13"><rect x="0.6" y="0.6" width="12.8" height="11.8" fill="none" stroke="#555" stroke-width="1.2"/><rect x="3.1" y="2.6" width="7.8" height="7.8" fill="none" stroke="#555" stroke-width="1"/><path d="M4.8 4.7 H9.2 M4.8 6.5 H9.2 M4.8 8.3 H9.2" stroke="#555" stroke-width="0.9"/></svg><svg class="a" style="left:587px;top:690px" width="14" height="13" viewBox="0 0 14 13"><rect x="0.6" y="0.6" width="12.8" height="11.8" fill="none" stroke="#555" stroke-width="1.2"/><path d="M3.7 0.6 V7.6 H11.2 V0.6 M7.7 0.6 V7.6" fill="none" stroke="#555" stroke-width="1.1"/></svg><div class="a" style="left:620px;top:696px;width:8px;height:1px;background:#888"></div><div class="a" style="left:633px;top:697px;width:100px;height:1px;background:#cfcfcf"></div><div class="a" style="left:683px;top:694px;width:1px;height:5px;background:#bbb"></div><svg class="a" style="left:737px;top:692px" width="10" height="10" viewBox="0 0 10 10"><path d="M5 0.5 V9.5 M0.5 5 H9.5" stroke="#888" stroke-width="1"/></svg><div class="t" style="left:758px;top:687px;font-size:12px;color:#ababab;line-height:20px;height:20px;letter-spacing:-0.75px">100 %</div></body></html>
